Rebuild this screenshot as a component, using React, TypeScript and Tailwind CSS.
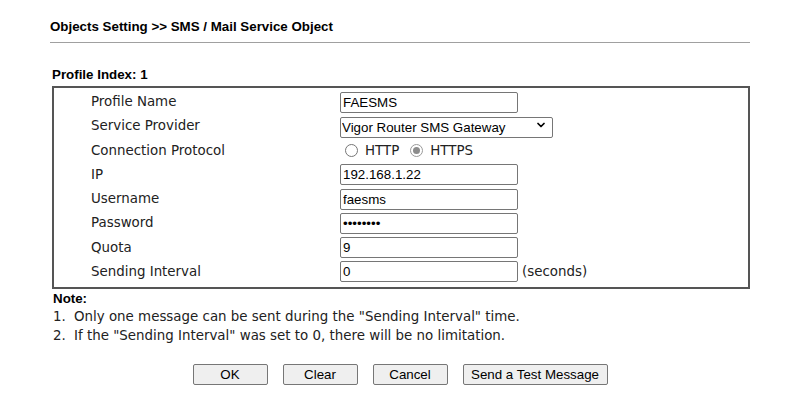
import { ChevronDown } from "lucide-react";

const verdana = "font-['DejaVu_Sans',Verdana,sans-serif]";
const arial = "font-['Liberation_Sans',Arial,sans-serif]";

const inputCls = `h-[21px] w-[178px] rounded-[2px] border border-[#767676] bg-white px-[2px] text-[13.33px] text-black ${arial}`;

function Row({ label, children }: { label: string; children: React.ReactNode }) {
  return (
    <div className="flex h-[24.25px] items-center">
      <div className={`w-[249px] shrink-0 text-[13.4px] text-[#222] ${verdana}`}>{label}</div>
      <div className="flex items-center">{children}</div>
    </div>
  );
}

function Radio({ checked }: { checked?: boolean }) {
  return checked ? (
    <span className="flex h-[13px] w-[13px] items-center justify-center rounded-full border border-[#9a9a9a] bg-white">
      <span className="h-[7px] w-[7px] rounded-full bg-[#8c8c8c]" />
    </span>
  ) : (
    <span className="h-[13px] w-[13px] rounded-full border border-[#767676] bg-white" />
  );
}

export default function App() {
  return (
    <div className="h-[400px] w-[800px] bg-white text-black">
      <div className="mx-[50px] w-[700px] pt-[19px]">
        <div className={`text-[13.33px] font-bold leading-[16px] ${arial}`}>
          Objects Setting &gt;&gt; SMS / Mail Service Object
        </div>
        <div className="mt-[7px] h-px bg-[#a0a0a0]" />

        <div className={`mt-[25px] pl-[2px] text-[13.33px] font-bold leading-[14px] ${arial}`}>Profile Index: 1</div>

        <div className="ml-[2px] mt-[4px] border-2 border-[#555] pb-[3px] pl-[37px] pt-[2px]">
          <Row label="Profile Name">
            <input className={inputCls} defaultValue="FAESMS" />
          </Row>
          <Row label="Service Provider">
            <div className="relative">
              <select
                className={`h-[21px] w-[213px] appearance-none rounded-[2px] border border-[#767676] bg-white pl-[1px] text-[13.33px] text-black ${arial}`}
                defaultValue="vigor"
              >
                <option value="vigor">Vigor Router SMS Gateway</option>
              </select>
              <ChevronDown
                className="pointer-events-none absolute right-[6px] top-[5px] h-[12px] w-[12px] text-black"
                strokeWidth={3.5}
              />
            </div>
          </Row>
          <Row label="Connection Protocol">
            <label className={`ml-[5px] flex items-center gap-[7px] text-[13.4px] text-[#222] ${verdana}`}>
              <Radio />
              HTTP
            </label>
            <label className={`ml-[11px] flex items-center gap-[7px] text-[13.4px] text-[#222] ${verdana}`}>
              <Radio checked />
              HTTPS
            </label>
          </Row>
          <Row label="IP">
            <input className={inputCls} defaultValue="192.168.1.22" />
          </Row>
          <Row label="Username">
            <input className={inputCls} defaultValue="faesms" />
          </Row>
          <Row label="Password">
            <input type="password" className={inputCls} defaultValue="faesms12" />
          </Row>
          <Row label="Quota">
            <input className={inputCls} defaultValue="9" />
          </Row>
          <Row label="Sending Interval">
            <input className={inputCls} defaultValue="0" />
            <span className={`ml-[4px] text-[13.4px] text-[#222] ${verdana}`}>(seconds)</span>
          </Row>
        </div>

        <div className={`ml-[3px] mt-[3px] text-[13.33px] font-bold leading-[14px] ${arial}`}>Note:</div>
        <div className={`ml-[3px] mt-[1px] text-[13.4px] leading-[19px] text-[#222] ${verdana}`}>
          <div className="flex">
            <span className="w-[21px]">1.</span>
            <span>Only one message can be sent during the "Sending Interval" time.</span>
          </div>
          <div className="flex">
            <span className="w-[21px]">2.</span>
            <span>If the "Sending Interval" was set to 0, there will be no limitation.</span>
          </div>
        </div>

        <div className={`mt-[19px] flex justify-center gap-[15px] text-[13.33px] ${arial}`}>
          <button className="h-[21px] w-[75px] rounded-[2px] border border-[#767676] bg-[#efefef]">OK</button>
          <button className="h-[21px] w-[75px] rounded-[2px] border border-[#767676] bg-[#efefef]">Clear</button>
          <button className="h-[21px] w-[75px] rounded-[2px] border border-[#767676] bg-[#efefef]">Cancel</button>
          <button className="h-[21px] w-[145px] rounded-[2px] border border-[#767676] bg-[#efefef]">Send a Test Message</button>
        </div>
      </div>
    </div>
  );
}
